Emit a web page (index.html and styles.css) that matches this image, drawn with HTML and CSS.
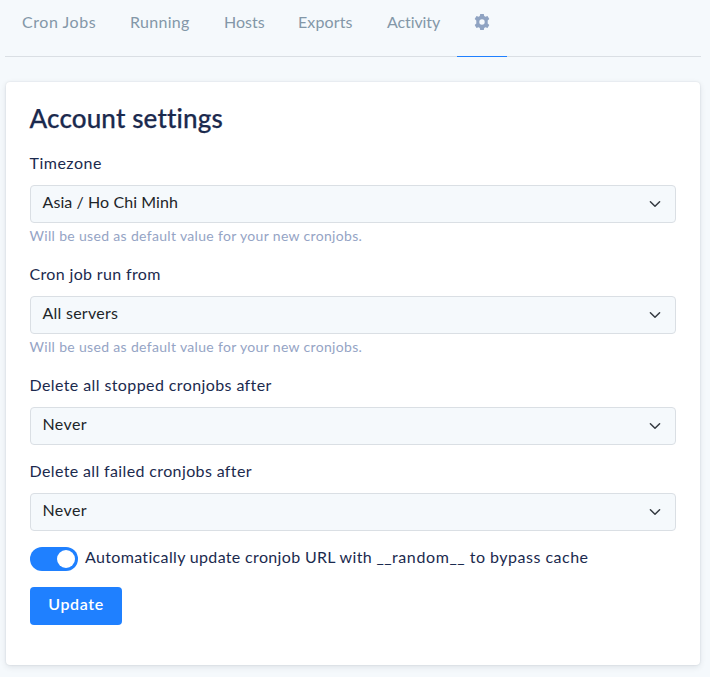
FILE: index.html
```html
<!DOCTYPE html>
<html lang="en">
<head>
<meta charset="utf-8">
<title>Account settings</title>
<link rel="stylesheet" href="styles.css">
</head>
<body>
<nav class="tabs">
  <a class="tab tab-jobs">Cron Jobs</a>
  <a class="tab tab-running">Running</a>
  <a class="tab tab-hosts">Hosts</a>
  <a class="tab tab-exports">Exports</a>
  <a class="tab tab-activity">Activity</a>
  <a class="tab tab-settings active" aria-label="Settings">
    <svg class="gear" viewBox="0 0 16 16"><path fill-rule="evenodd" d="M6.2 0h3.6l.4 2.1 1.2.7 2.1-.8 1.8 3.1-1.6 1.4v3l1.6 1.4-1.8 3.1-2.1-.8-1.2.7-.4 2.1H6.2l-.4-2.1-1.2-.7-2.1.8L.7 10.900l1.600-1.400v-3L.7 5.100 2.500 2l2.100.8 1.200-.7zM8 5.300a2.700 2.700 0 1 0 0 5.400 2.700 2.700 0 0 0 0-5.400z"/></svg>
  </a>
</nav>
<main class="card">
  <h1 class="title">Account settings</h1>
  <form>
    <div class="field">
      <label class="label l-timezone">Timezone</label>
      <div class="select"><span class="v-zone">Asia / Ho Chi Minh</span><svg class="chevron" viewBox="0 0 12 8"><path d="M1.400 1.800 6 6.200l4.600-4.400"/></svg></div>
      <p class="hint">Will be used as default value for your new cronjobs.</p>
    </div>
    <div class="field">
      <label class="label l-from">Cron job run from</label>
      <div class="select"><span class="v-servers">All servers</span><svg class="chevron" viewBox="0 0 12 8"><path d="M1.400 1.800 6 6.200l4.600-4.400"/></svg></div>
      <p class="hint">Will be used as default value for your new cronjobs.</p>
    </div>
    <div class="field">
      <label class="label l-stopped">Delete all stopped cronjobs after</label>
      <div class="select"><span class="v-never">Never</span><svg class="chevron" viewBox="0 0 12 8"><path d="M1.400 1.800 6 6.200l4.600-4.400"/></svg></div>
    </div>
    <div class="field">
      <label class="label l-failed">Delete all failed cronjobs after</label>
      <div class="select"><span class="v-never">Never</span><svg class="chevron" viewBox="0 0 12 8"><path d="M1.400 1.800 6 6.200l4.600-4.400"/></svg></div>
    </div>
    <div class="switch-row">
      <span class="switch"><span class="knob"></span></span>
      <span class="switch-label">Automatically update cronjob URL with <span class="token">__<span class="word">random</span>__</span><span class="tail"> to bypass cache</span></span>
    </div>
    <button class="button" type="button">Update</button>
  </form>
</main>
</body>
</html>
```
FILE: styles.css
```css
* { box-sizing: border-box; }
body {
  margin: 0;
  padding: 0 9px 0 5px;
  background: #f5f9fc;
  color: #1b2a4e;
  font: 16px/24px Lato, "Liberation Sans", sans-serif;
}
.tabs {
  display: flex;
  height: 57px;
  border-bottom: 1px solid #dadfe4;
}
.tab {
  height: 57px;
  padding: 10px 0 0 17px;
  color: #8397a8;
  white-space: nowrap;
}
.tab-jobs { width: 108px; letter-spacing: .56px; }
.tab-running { width: 94px; letter-spacing: .3px; }
.tab-hosts { width: 74px; }
.tab-exports { width: 89px; letter-spacing: .12px; }
.tab-activity { width: 87px; letter-spacing: -.1px; }
.tab-settings { width: 50px; }
.active { border-bottom: 1px solid #1f80ff; }
.gear {
  display: block;
  width: 16px;
  height: 16px;
  margin-top: 4px;
  fill: #8fa3c2;
}
.card {
  width: 694px;
  height: 583px;
  margin: 25px 0 12px 1px;
  padding: 20px 24px 0 23px;
  background: #fff;
  border-radius: 4px;
  box-shadow: 0 0 2px rgba(22, 28, 45, .12), 0 2px 6px rgba(22, 28, 45, .1);
}
.title {
  margin: -1px 0 16px .5px;
  font-size: 26px;
  font-weight: 500;
  line-height: 34px;
  letter-spacing: .15px;
  -webkit-text-stroke: .25px #1b2a4e;
}
.field { padding-left: 1px; margin-bottom: 15px; }
.label {
  display: block;
  height: 34px;
  margin-left: -.5px;
  line-height: 24px;
}
.field + .field .label { margin-top: -1px; }
.l-timezone { letter-spacing: .5px; }
.l-from { letter-spacing: .35px; }
.l-stopped { letter-spacing: .4px; }
.l-failed { letter-spacing: .37px; }
.v-zone { letter-spacing: .08px; }
.v-servers { letter-spacing: .25px; }
.v-never { letter-spacing: .4px; }
.select {
  display: flex;
  align-items: center;
  justify-content: space-between;
  height: 38px;
  padding: 0 14px 4px 11.500px;
  background: #f5f9fc;
  border: 1px solid #dadfe4;
  border-radius: 4px;
  color: #212529;
}
.chevron {
  width: 12px;
  height: 8px;
  margin-top: 4px;
  fill: none;
  stroke: #343a40;
  stroke-width: 1.5;
  stroke-linecap: round;
  stroke-linejoin: round;
}
.hint {
  height: 25px;
  margin: 0 0 0 -.5px;
  padding-top: 2px;
  color: #95a4c5;
  font-size: 14px;
  line-height: 21px;
  letter-spacing: .33px;
}
.switch-row {
  display: flex;
  align-items: flex-start;
  height: 41px;
  padding-left: 1px;
}
.switch {
  display: flex;
  justify-content: flex-end;
  width: 48px;
  height: 24px;
  margin: 1px 7px 0 0;
  padding: 3px;
  background: #1f80ff;
  border-radius: 12px;
}
.knob { width: 18px; height: 18px; border-radius: 50%; background: #fff; }
.switch-label { margin-top: -1px; white-space: nowrap; letter-spacing: .34px; }
.token { letter-spacing: .4px; }
.word { letter-spacing: .65px; }
.tail { letter-spacing: .5px; }
.button {
  display: block;
  width: 92px;
  height: 38px;
  margin-left: 1px;
  padding: 0 0 4px;
  border: 0;
  border-radius: 4px;
  background: #1f80ff;
  color: #fff;
  font: 600 16px/24px Lato, "Liberation Sans", sans-serif;
  letter-spacing: .6px;
}
```
